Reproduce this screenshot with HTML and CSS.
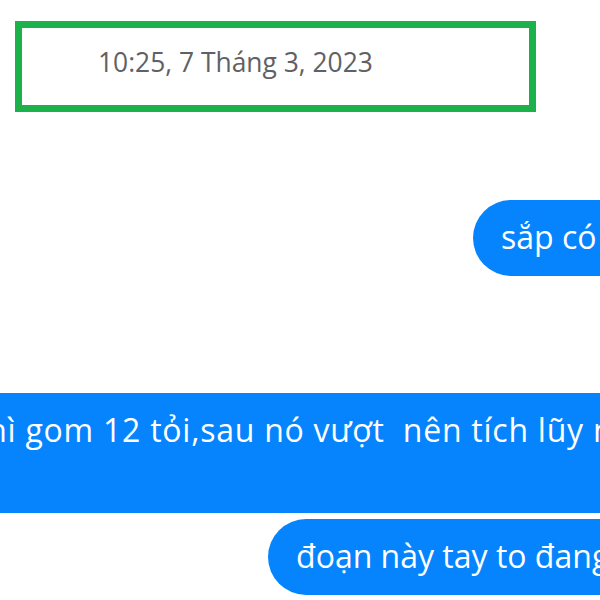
FILE: index.html
```html
<!DOCTYPE html>
<html lang="vi">
<head>
<meta charset="utf-8">
<title>Chat</title>
<link rel="stylesheet" href="styles.css">
</head>
<body>
<div class="chat">
  <div class="stamp-box">
    <span class="stamp">10:25, 7 Tháng 3, 2023</span>
  </div>
  <div class="bubble b-one">sắp có rồi đó anh em</div>
  <div class="bubble b-two">thì gom 12 tỏi,sau nó vượt  nên tích lũy mãi không thôi</div>
  <div class="bubble b-three">đoạn này tay to đang gom hàng</div>
</div>
</body>
</html>
```
FILE: styles.css
```css
html, body {
  margin: 0;
  padding: 0;
  background: #ffffff;
  overflow: hidden;
}
.chat {
  width: 600px;
  height: 600px;
  overflow: hidden;
  display: flex;
  flex-direction: column;
  align-items: flex-start;
  font-family: "Open Sans", "Noto Sans", sans-serif;
}
.stamp-box {
  box-sizing: border-box;
  width: 521px;
  height: 91px;
  margin: 21px 0 0 15px;
  border: 7px solid #1db14b;
  padding: 16px 0 0 76px;
}
.stamp {
  font-size: 26.4px;
  color: #5f6165;
  line-height: normal;
}
.bubble {
  flex: none;
  box-sizing: border-box;
  background: #0584fe;
  color: #ffffff;
  font-size: 32px;
  line-height: 40px;
  padding: 17px 28px 19px;
  white-space: pre;
  border-radius: 38px;
}
.b-one {
  margin: 88px 0 0 473px;
}
.b-two {
  margin: 117px 0 0 -53px;
  padding-bottom: 63px;
  border-radius: 0;
  width: 800px;
  letter-spacing: 0.75px;
}
.b-three {
  margin: 6px 0 0 268px;
}
```
